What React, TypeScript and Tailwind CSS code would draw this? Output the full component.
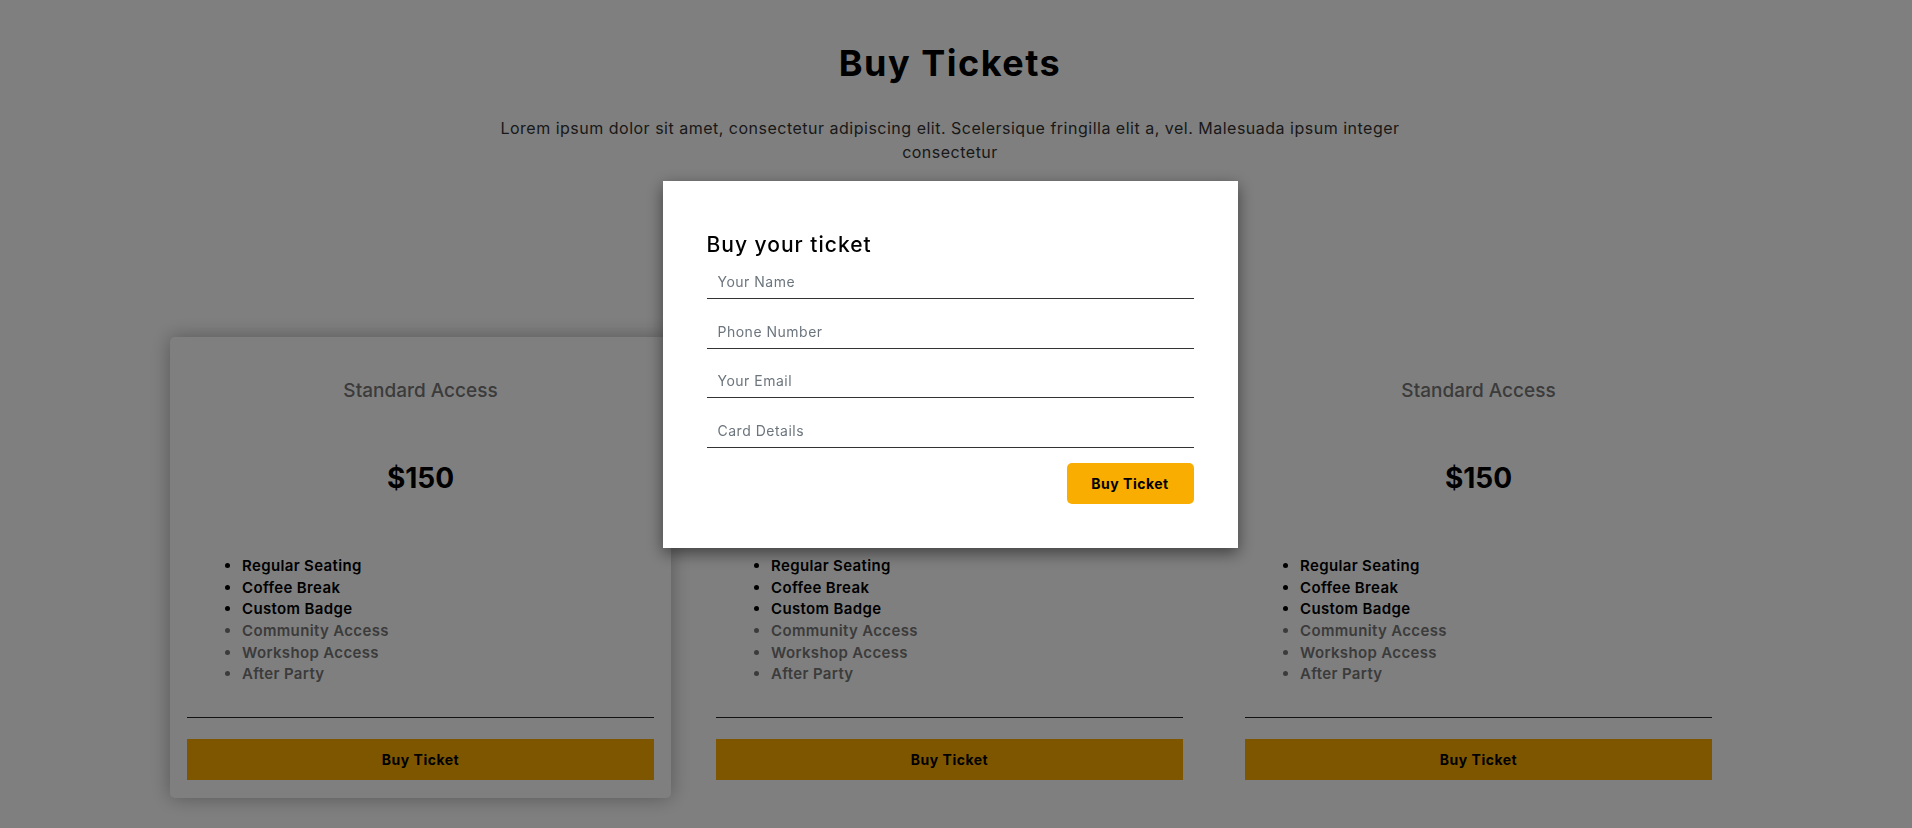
import React from "react";

// ticket tiers shown behind the purchase dialog
const features = [
  { label: "Regular Seating", included: true },
  { label: "Coffee Break", included: true },
  { label: "Custom Badge", included: true },
  { label: "Community Access", included: false },
  { label: "Workshop Access", included: false },
  { label: "After Party", included: false },
];

function TicketCard({ raised }: { raised?: boolean }) {
  return (
    <div
      className={
        "flex w-[501px] flex-col rounded-[5px] bg-white px-[17px] pt-[39px] pb-[18px] " +
        (raised ? "shadow-[0_0_20px_rgba(0,0,0,0.32)]" : "")
      }
    >
      <h3 className="text-center text-[19px] leading-[30px] font-medium text-[#767676]">
        Standard Access
      </h3>
      <div className="mt-[54px] text-center text-[28px] leading-[36px] font-bold text-black">
        $150
      </div>
      <ul className="mt-[59px] list-disc pl-[55px]">
        {features.map((f) => (
          <li
            key={f.label}
            className={
              "text-[15px] leading-[21.6px] font-semibold tracking-[0.35px] " +
              (f.included ? "text-black" : "text-[#777777]")
            }
          >
            {f.label}
          </li>
        ))}
      </ul>
      <hr className="mt-[32px] border-0 border-t border-[#222]" />
      <button className="mt-[21px] h-[41px] w-full bg-[#ffad00] text-[14px] font-bold tracking-[0.5px] text-black">
        Buy Ticket
      </button>
    </div>
  );
}

export default function App() {
  const fields = ["Your Name", "Phone Number", "Your Email", "Card Details"];

  return (
    <div className="relative min-h-screen bg-white pr-[12px] font-['Inter',sans-serif]">
      <section className="pt-[42px] pb-[30px]">
        <h1 className="text-center text-[36px] leading-[1.2] font-bold tracking-[1.5px] text-black">Buy Tickets</h1>
        <p className="mx-auto mt-[31px] w-[930px] text-center text-[16px] leading-[24px] tracking-[0.5px] text-[#333]">
          Lorem ipsum dolor sit amet, consectetur adipiscing elit. Scelersique fringilla elit a, vel. Malesuada ipsum
          integer consectetur
        </p>
        <div className="mx-auto mt-[173px] flex w-[1560px] gap-[28px]">
          <TicketCard raised />
          <TicketCard />
          <TicketCard />
        </div>
      </section>

      {/* backdrop + dialog */}
      <div className="fixed inset-0 flex items-start justify-center bg-black/50 pt-[181px] pr-[12px]">
        <div className="flex w-[575px] flex-col bg-white px-[44px] pt-[52px] pb-[44px] shadow-[0_5px_15px_rgba(0,0,0,0.5)]">
          <h2 className="text-[21px] leading-[24px] font-medium tracking-[1px] text-black">Buy your ticket</h2>
          {fields.map((f, i) => (
            <input
              key={f}
              type="text"
              placeholder={f}
              className={
                "h-[42px] w-full border-0 border-b border-[#333] bg-transparent pt-[8px] pl-[11px] text-[14px] tracking-[0.5px] text-black placeholder-[#6c757d] outline-none " +
                (i > 0 ? "mt-[7.7px]" : "")
              }
            />
          ))}
          <div className="mt-[15px] flex justify-end">
            <button className="h-[41px] w-[127px] rounded-[5px] bg-[#f9ad00] text-[14px] font-bold tracking-[0.5px] text-black">
              Buy Ticket
            </button>
          </div>
        </div>
      </div>
    </div>
  );
}
